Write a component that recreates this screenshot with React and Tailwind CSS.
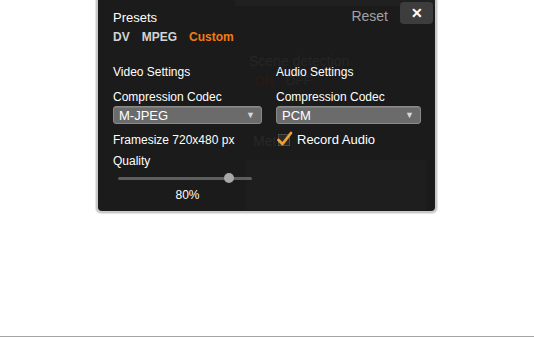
import React from 'react';

const font = { fontFamily: '"Liberation Sans", Arial, sans-serif' };

function Dropdown({ value }) {
  return (
    <div className="flex h-[18px] items-center justify-between rounded-[3px] border border-[#8a8a8a] bg-[#6b6b6b] pl-[5px] pr-[6px] shadow-[inset_0_1px_0_#7d7d7d]">
      <span className="text-[13px] leading-none text-white">{value}</span>
      <span className="text-[9px] leading-none text-[#d8d8d8]">▼</span>
    </div>
  );
}

export default function App() {
  return (
    <div className="flex h-[337px] w-[534px] flex-col bg-white" style={font}>
      <div className="ml-[96px] h-[213px] w-[341px] rounded-b-[5px] bg-[#c9c9c9] p-[2px] pt-0 shadow-[0_0_1px_1px_#e4e4e4]">
        <div className="relative h-full w-full overflow-hidden rounded-b-[4px] bg-[#1b1b1b] pl-[15px] pr-[2px]">
          {/* faded panel behind */}
          <div className="absolute left-[137px] top-0 h-[6px] w-[200px] bg-[#202020]" />
          <div className="absolute left-[151px] top-[53px] text-[14px] leading-[16px] text-[#262626]">Scene detection</div>
          <div className="absolute left-[156px] top-[74px] flex gap-[12px] text-[13px] leading-[14px]">
            <span className="text-[#2e1a0e]">ON</span>
            <span className="text-[#252525]">OFF</span>
          </div>
          <div className="absolute left-[155px] top-[133px] text-[14px] leading-[16px] text-[#282828]">Met</div>
          <div className="absolute left-[148px] top-[160px] h-[50px] w-[180px] bg-[#1e1e1e]" />

          <div className="relative flex items-start justify-between">
            <div className="flex flex-col">
              <span className="mt-[10px] text-[13px] leading-[15px] text-white">Presets</span>
              <div className="mt-[5px] flex gap-[12px] text-[12px] font-bold leading-[14px]">
                <span className="text-[#d4d4d4]">DV</span>
                <span className="text-[#d4d4d4]">MPEG</span>
                <span className="text-[#f27b12]">Custom</span>
              </div>
            </div>
            <div className="flex items-start gap-[12px]">
              <span className="mt-[8px] text-[14px] leading-[16px] text-[#a2a2a2]">Reset</span>
              <div className="mt-[2px] flex h-[22px] w-[33px] items-center justify-center rounded-[4px] bg-[#3d3d3d] text-[14px] font-bold text-white">
                ✕
              </div>
            </div>
          </div>

          <div className="relative mt-[21px] grid grid-cols-[149px_145px] gap-x-[14px]">
            <div className="flex flex-col">
              <span className="text-[12px] leading-[14px] text-white">Video Settings</span>
              <span className="mt-[11px] text-[12px] leading-[14px] text-white">Compression Codec</span>
              <div className="mt-[2px]">
                <Dropdown value="M-JPEG" />
              </div>
              <span className="mt-[9px] text-[12px] leading-[14px] text-white">Framesize 720x480 px</span>
              <span className="mt-[7px] text-[12px] leading-[14px] text-white">Quality</span>
              <div className="relative ml-[5px] mt-[9px] h-[3px] w-[134px] rounded-full bg-[#5e5e5e]">
                <div className="absolute left-[106px] top-[-4px] h-[10px] w-[10px] rounded-full bg-[#a8a8a8]" />
              </div>
              <span className="mt-[8px] text-center text-[12px] leading-[14px] text-white">80%</span>
            </div>
            <div className="flex flex-col">
              <span className="text-[12px] leading-[14px] text-white">Audio Settings</span>
              <span className="mt-[11px] text-[12px] leading-[14px] text-white">Compression Codec</span>
              <div className="mt-[2px]">
                <Dropdown value="PCM" />
              </div>
              <div className="mt-[8px] flex items-center gap-[7px]">
                <div className="relative ml-[2px] h-[12px] w-[12px] border border-[#4a4a4a] bg-[#2a2a2a]">
                  <svg className="absolute left-[-3px] top-[-5px]" width="17" height="17" viewBox="0 0 17 17">
                    <path d="M2.5 10 L6.5 14 L15 3" fill="none" stroke="#f0a030" strokeWidth="2.8" strokeLinecap="round" strokeLinejoin="round" />
                  </svg>
                </div>
                <span className="text-[13px] leading-[15px] text-white">Record Audio</span>
              </div>
            </div>
          </div>
        </div>
      </div>
      <div className="mt-auto h-px w-full bg-[#a4a4a4]" />
    </div>
  );
}
